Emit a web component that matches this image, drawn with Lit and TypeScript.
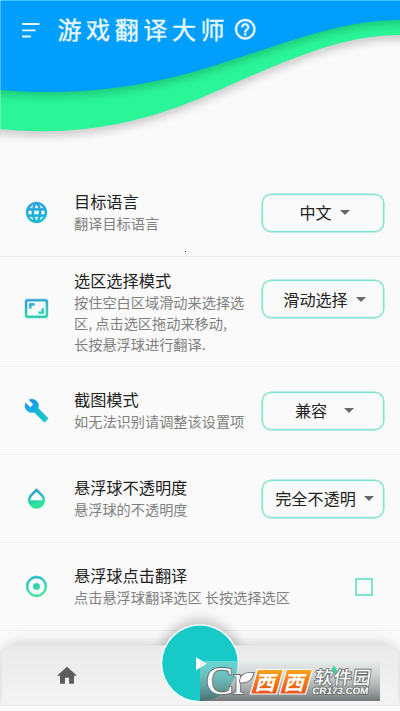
import { LitElement, html, css, svg } from "lit";
import { customElement, property } from "lit/decorators.js";

const icons: Record<string, unknown> = {
  globe: svg`<path d="M11.99 2C6.47 2 2 6.48 2 12s4.47 10 9.99 10C17.52 22 22 17.52 22 12S17.52 2 11.99 2zm6.93 6h-2.95c-.32-1.25-.78-2.45-1.38-3.56 1.84.63 3.37 1.91 4.33 3.56zM12 4.04c.83 1.2 1.48 2.53 1.91 3.96h-3.82c.43-1.43 1.08-2.76 1.91-3.96zM4.26 14C4.1 13.36 4 12.69 4 12s.1-1.36.26-2h3.38c-.08.66-.14 1.32-.14 2s.06 1.34.14 2H4.26zm.82 2h2.95c.32 1.25.78 2.45 1.38 3.56-1.84-.63-3.37-1.9-4.33-3.56zm2.95-8H5.08c.96-1.66 2.49-2.93 4.33-3.56C8.81 5.55 8.35 6.75 8.03 8zM12 19.96c-.83-1.2-1.48-2.53-1.91-3.96h3.82c-.43 1.43-1.08 2.76-1.91 3.96zM14.34 14H9.66c-.09-.66-.16-1.32-.16-2s.07-1.35.16-2h4.68c.09.65.16 1.32.16 2s-.07 1.34-.16 2zm.25 5.56c.6-1.11 1.06-2.31 1.38-3.56h2.95c-.96 1.65-2.49 2.93-4.33 3.56zM16.36 14c.08-.66.14-1.32.14-2s-.06-1.34-.14-2h3.38c.16.64.26 1.31.26 2s-.1 1.36-.26 2h-3.38z"/>`,
  area: svg`<path d="M19 12h-2v3h-3v2h5v-5zM7 9h3V7H5v5h2V9zm14-6H3c-1.1 0-2 .9-2 2v14c0 1.1.9 2 2 2h18c1.1 0 2-.9 2-2V5c0-1.1-.9-2-2-2zm0 16.01H3V4.99h18v14.02z"/>`,
  wrench: svg`<path d="M22.7 19l-9.1-9.1c.9-2.3.4-5-1.5-6.9-2-2-5-2.4-7.4-1.3L9 6 6 9 1.6 4.7C.4 7.1.9 10.1 2.9 12.1c1.9 1.9 4.6 2.4 6.9 1.5l9.1 9.1c.4.4 1 .4 1.4 0l2.3-2.3c.5-.4.5-1.1.1-1.4z"/>`,
  drop: svg`<path d="M17.66 8L12 2.35 6.34 8C4.78 9.56 4 11.64 4 13.64s.78 4.11 2.34 5.67 3.61 2.35 5.66 2.35 4.1-.79 5.66-2.35S20 15.64 20 13.64 19.22 9.56 17.66 8zM6 14c.01-2 .62-3.27 1.76-4.4L12 5.27l4.24 4.38C17.38 10.77 17.99 12 18 14H6z"/>`,
  target: svg`<path fill-rule="evenodd" d="M12 2a10 10 0 1 0 0 20 10 10 0 0 0 0-20zm0 2a8 8 0 1 1 0 16 8 8 0 0 1 0-16zm0 4.8a3.2 3.2 0 1 0 0 6.4 3.2 3.2 0 0 0 0-6.4z"/>`,
};

const tones: Record<string, [string, string]> = {
  globe: ["#2b9fe0", "#12b5d8"],
  area: ["#2b9fd8", "#2fcfb0"],
  wrench: ["#1494f2", "#14c4cc"],
  drop: ["#2496d8", "#2ee29a"],
  target: ["#22b8c8", "#3fe0a0"],
};

@customElement("setting-row")
class SettingRow extends LitElement {
  @property() icon = "globe";
  @property() heading = "";
  @property({ attribute: false }) lines: string[] = [];
  @property() value = "";

  static styles = css`
    :host {
      display: flex;
      align-items: center;
      box-sizing: border-box;
      height: 88px;
      padding: 0 16px 0 23.5px;
      border-bottom: 1px solid #eeeeee;
    }
    :host([tall]) { height: 110px; }
    :host([tall]) .select { margin-bottom: 25px; }
    :host([tall]) .icon { margin-bottom: 6px; }
    :host([tall]) .body { padding-top: 1px; }
    .icon { width: 25px; height: 25px; flex: none; margin-right: 25.5px; stroke-width: 0.4; }
    .body { flex: 1; white-space: nowrap; min-width: 0; margin-top: -1px; }
    .heading { font-size: 16.2px; line-height: 23px; color: #222; }
    .line { font-size: 14.2px; line-height: 21px; color: #808080; }
    .select {
      box-sizing: border-box;
      flex: none;
      width: 122px;
      height: 38px;
      border: 1px solid #7fe3d0;
      box-shadow: 0 0 0 0.5px #7fe3d0, inset 0 0 1px #7fe3d0;
      border-radius: 9px;
      display: flex;
      align-items: center;
      justify-content: center;
      gap: 8px;
      padding-left: 3px;
      font-size: 16.1px;
      color: #222;
      white-space: nowrap;
    }
    .select.wide { gap: 17px; }
    .select span { margin-top: -1px; }
    .arrow { width: 10px; height: 5px; flex: none; fill: #666; }
    .check {
      box-sizing: border-box;
      width: 18px;
      height: 18px;
      border: 2px solid #7fe3cb;
      margin-right: 11px;
    }
  `;

  render() {
    const [from, to] = tones[this.icon];
    return html`
      <svg class="icon" viewBox="0 0 24 24" fill="url(#tone)" stroke="url(#tone)">
        <defs>
          <linearGradient id="tone" x1="0" y1="0" x2="0.25" y2="1">
            <stop offset="0.1" stop-color=${from} />
            <stop offset="0.85" stop-color=${to} />
          </linearGradient>
        </defs>
        ${icons[this.icon]}
      </svg>
      <div class="body">
        <div class="heading">${this.heading}</div>
        ${this.lines.map((l) => html`<div class="line">${l}</div>`)}
      </div>
      ${this.value
        ? html`<div class="select ${this.value === "兼容" ? "wide" : ""}">
            <span>${this.value}</span>
            <svg class="arrow" viewBox="0 0 10 5"><path d="M0 0h10L5 5z" /></svg>
          </div>`
        : html`<div class="check"></div>`}
    `;
  }
}

@customElement("app-root")
class AppRoot extends LitElement {
  static styles = css`
    :host {
      display: flex;
      flex-direction: column;
      position: relative;
      width: 400px;
      height: 711px;
      overflow: hidden;
      background: #fafafa;
      font-family: "Noto Sans CJK SC", sans-serif;
    }
    header { position: relative; height: 169px; flex: none; }
    .wave { position: absolute; left: 0; top: 0; width: 400px; height: 169px; }
    .bar { position: relative; display: flex; align-items: center; height: 60px; padding-left: 22px; }
    .menu { width: 18px; height: 16px; margin-right: 17.5px; }
    .title {
      font-size: 24px;
      -webkit-text-stroke: 0.4px #e9f8ff;
      letter-spacing: 4.6px;
      line-height: 30px;
      color: #e9f8ff;
      white-space: nowrap;
      margin-top: -3px;
    }
    .help { width: 24.5px; height: 24.5px; margin-left: 3.5px; margin-top: -2px; fill: #e9f8ff; stroke: #e9f8ff; stroke-width: 0.4; }
    .speck { position: absolute; left: 185px; top: 251px; width: 1px; height: 1px; background: #111; }
    .dock { position: absolute; left: 0; top: 600px; width: 400px; height: 111px; }
  `;

  render() {
    return html`
      <header>
        <svg class="wave" viewBox="0 0 400 169">
          <defs>
            <filter id="soft" x="-10%" y="-10%" width="120%" height="130%"><feGaussianBlur stdDeviation="4" /></filter>
            <clipPath id="band"><path d="M0 0V129C70 136 135 127 210 94S340 35 400 35V0z" /></clipPath>
          </defs>
          <path d="M-20 -20V131H0C70 138 135 129 210 96S340 37 400 37H420V-20z" transform="translate(0 3)" fill="#000" opacity=".18" filter="url(#soft)" />
          <path d="M0 0V129C70 136 135 127 210 94S340 35 400 35V0z" fill="#2af598" />
          <g clip-path="url(#band)">
            <path d="M-20 -20V90H0C60 95 130 92 210 67S340 20 400 20H420V-20z" transform="translate(0 4)" fill="#006030" opacity=".3" filter="url(#soft)" />
          </g>
          <path d="M0 0V90C60 95 130 92 210 67S340 20 400 20V0z" fill="#009efd" />
          <path d="M0 0h400v1H0z" fill="#49c4f8" />
          <path d="M0 0h1v129H0z" fill="#fff" opacity=".3" />
        </svg>
        <div class="bar">
          <svg class="menu" viewBox="0 0 18 16" stroke="#e9f8ff" stroke-width="1.8">
            <path d="M0 2h17.5M0 8.3h13.5M0 14.5h9" />
          </svg>
          <div class="title">游戏翻译大师</div>
          <svg class="help" viewBox="0 0 24 24">
            <path d="M11 18h2v-2h-2v2zm1-16C6.48 2 2 6.48 2 12s4.48 10 10 10 10-4.48 10-10S17.52 2 12 2zm0 18c-4.41 0-8-3.59-8-8s3.59-8 8-8 8 3.59 8 8-3.59 8-8 8zm0-14c-2.21 0-4 1.79-4 4h2c0-1.1.9-2 2-2s2 .9 2 2c0 2-3 1.75-3 5h2c0-2.25 3-2.5 3-5 0-2.21-1.79-4-4-4z" />
          </svg>
        </div>
      </header>
      <setting-row icon="globe" heading="目标语言" .lines=${["翻译目标语言"]} value="中文"></setting-row>
      <setting-row tall icon="area" heading="选区选择模式"
        .lines=${["按住空白区域滑动来选择选", "区, 点击选区拖动来移动,", "长按悬浮球进行翻译."]} value="滑动选择"></setting-row>
      <setting-row icon="wrench" heading="截图模式" .lines=${["如无法识别请调整该设置项"]} value="兼容"></setting-row>
      <setting-row icon="drop" heading="悬浮球不透明度" .lines=${["悬浮球的不透明度"]} value="完全不透明"></setting-row>
      <setting-row icon="target" heading="悬浮球点击翻译" .lines=${["点击悬浮球翻译选区 长按选择选区"]}></setting-row>
      <div class="speck"></div>
      <svg class="dock" viewBox="0 600 400 111">
        <defs>
          <filter id="haze" x="-20%" y="-40%" width="140%" height="180%"><feGaussianBlur stdDeviation="6" /></filter>
          <linearGradient id="tray" x1="0" y1="0" x2="0" y2="1">
            <stop offset="0" stop-color="#e9e9e9" /><stop offset="1" stop-color="#f4f4f4" />
          </linearGradient>
          <linearGradient id="plate" x1="0" y1="0" x2="0" y2="1">
            <stop offset="0" stop-color="#e0e6e6" stop-opacity=".4" />
            <stop offset=".5" stop-color="#a0a4a4" stop-opacity=".6" />
            <stop offset="1" stop-color="#505858" stop-opacity=".8" />
          </linearGradient>
          <linearGradient id="ember" x1="0" y1="0" x2="0" y2="1">
            <stop offset="0" stop-color="#fba41c" /><stop offset="1" stop-color="#e8501c" />
          </linearGradient>
        </defs>
        <path d="M14 642H386L400 652V705H0V652z" fill="#000" opacity=".14" filter="url(#haze)" />
        <circle cx="200" cy="660" r="41" fill="#000" opacity=".2" filter="url(#haze)" />
        <path d="M2 705V654Q7 646 16 645.5H384Q393 646 398 654V705z" fill="url(#tray)" />
        <path d="M0 705h400v6H0z" fill="#fcfcfc" />
        <path d="M0 705h400v1H0z" fill="#e8e8e8" />
        <circle cx="200" cy="663.3" r="39.3" fill="#f4fbfb" />
        <circle cx="200" cy="663.3" r="37.7" fill="#17cac7" />
        <path d="M196 657.3v13l11-6.5z" fill="#fff" />
        <path d="M67 666.7l-10 9h3v8h5v-6h4v6h5v-8h3z" fill="#5c5c5c" />

        <path d="M200 661h180v40H200z" fill="url(#plate)" />
        <path d="M334 665l5 9h-10z" fill="#43d6a5" />
        <g stroke="#656a6a" stroke-width="1.8" paint-order="stroke" fill="#fff">
          <text x="206" y="694" font-family="Liberation Serif" font-size="41" textLength="41" lengthAdjust="spacingAndGlyphs">Cr</text>
          <path d="M240 682C240 675 246 672 253.500 673C252 680 246 684 240 682z" />
        </g>
        <g stroke="#fff" stroke-width="1.2">
          <path d="M257.500 669.500h26l-7 24.500h-26z" fill="url(#ember)" />
          <path d="M286.500 669.500h26l-7 24.500h-26z" fill="url(#ember)" />
        </g>
        <g fill="#fff" font-family="Noto Sans CJK SC" font-weight="700" font-size="20">
          <text transform="translate(254.5 689.500) skewX(-15)">西</text>
          <text transform="translate(283.5 689.500) skewX(-15)">西</text>
        </g>
        <g fill="#fff" stroke="#656a6a" stroke-width="1.6" paint-order="stroke">
          <text transform="translate(314 683.8) skewX(-8)" font-family="Noto Sans CJK SC" font-weight="500" font-size="18" textLength="56">软件园</text>
          <text transform="translate(312 694.300) skewX(-8)" font-family="Liberation Sans" font-weight="700" font-size="9.5" textLength="56" lengthAdjust="spacingAndGlyphs">CR173.COM</text>
        </g>
      </svg>
    `;
  }
}
